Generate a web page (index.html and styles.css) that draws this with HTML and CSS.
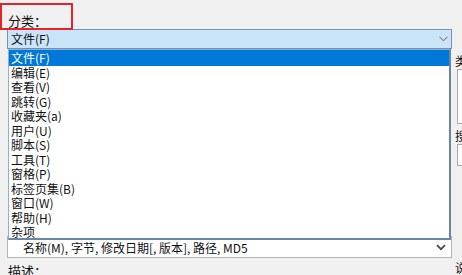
FILE: index.html
```html
<!DOCTYPE html>
<html lang="zh-CN">
<head>
<meta charset="utf-8">
<title>分类</title>
<link rel="stylesheet" href="styles.css">
</head>
<body>
<div class="dialog">
  <div class="main">
    <div class="cat-label">分类：</div>
    <div class="combo combo-open">
      <span class="combo-text">文件(F)</span>
      <svg class="chev" width="9" height="6" viewBox="0 0 9 6"><path d="M0.5 0.8 L4.5 4.8 L8.5 0.8" fill="none" stroke="#5a5a5a" stroke-width="1"/></svg>
    </div>
    <div class="gap"></div>
    <div class="combo combo2">
      <span class="combo-text">名称(M), 字节, 修改日期[, 版本], 路径, MD5</span>
      <svg class="chev chev2" width="10" height="7" viewBox="0 0 10 7"><path d="M1 1.2 L5 5.2 L9 1.2" fill="none" stroke="#4a4a4a" stroke-width="1.8"/></svg>
    </div>
    <div class="desc-label">描述：</div>
  </div>
  <div class="side">
    <div class="side-label">类</div>
    <div class="side-box tall"></div>
    <div class="side-label second">搜</div>
    <div class="side-box short"></div>
    <div class="side-label third">说</div>
  </div>

  <ul class="dropdown">
    <li class="selected">文件(F)</li>
    <li>编辑(E)</li>
    <li>查看(V)</li>
    <li>跳转(G)</li>
    <li>收藏夹(a)</li>
    <li>用户(U)</li>
    <li>脚本(S)</li>
    <li>工具(T)</li>
    <li>窗格(P)</li>
    <li>标签页集(B)</li>
    <li>窗口(W)</li>
    <li>帮助(H)</li>
    <li>杂项</li>
  </ul>
  <div class="highlight-box"></div>
</div>
</body>
</html>
```

FILE: styles.css
```css
html, body {
  margin: 0;
  padding: 0;
}
body {
  width: 462px;
  height: 275px;
  overflow: hidden;
  background: #f0f0f0;
  font-family: "Noto Sans CJK SC", "Noto Sans", sans-serif;
  font-size: 12px;
  color: #111;
}
.dialog {
  position: relative;
  display: flex;
  width: 462px;
  height: 275px;
  overflow: hidden;
}
.main {
  width: 452px;
  flex: none;
  display: flex;
  flex-direction: column;
}
.cat-label {
  height: 29px;
  box-sizing: border-box;
  padding: 13px 0 0 8px;
  font-size: 13px;
  line-height: 16px;
}
.combo {
  margin-left: 7px;
  width: 445px;
  box-sizing: border-box;
  display: flex;
  align-items: center;
  justify-content: space-between;
  flex: none;
}
.combo-open {
  height: 20px;
  background: #cce4f7;
  border: 1px solid #6f93b8;
  padding: 0 3px 0 3px;
}
.combo-text {
  line-height: 16px;
  white-space: nowrap;
}
.chev {
  display: block;
}
.gap {
  height: 187px;
  flex: none;
}
.combo2 {
  height: 22px;
  background: #fff;
  border: 1px solid #b4b4b4;
  padding: 0 5px 0 15px;
}
.combo2 .combo-text {
  padding-top: 1px;
}
.desc-label {
  padding-left: 8px;
  margin-top: 5px;
  font-size: 13px;
  line-height: 16px;
}
.side {
  margin-left: 3px;
  width: 30px;
  flex: none;
  display: flex;
  flex-direction: column;
  padding-top: 54px;
  box-sizing: border-box;
}
.side-label {
  height: 14px;
  line-height: 14px;
  font-size: 12px;
}
.side-label.second {
  margin-top: 5px;
}
.side-label.third {
  margin-top: 95px;
}
.side-box {
  margin-left: 2px;
  margin-top: 1px;
  background: #fff;
  border: 1px solid #a9a9a9;
  box-sizing: border-box;
}
.side-box.tall {
  height: 56px;
}
.side-box.short {
  height: 22px;
}
.dropdown {
  position: absolute;
  top: 49px;
  left: 8px;
  width: 443px;
  height: 191px;
  box-sizing: border-box;
  margin: 0;
  padding: 0;
  list-style: none;
  background: #fff;
  border-left: 1px solid #8fb0d2;
  border-top: 1px solid #8fb0d2;
  border-right: 2px solid #6787aa;
  border-bottom: 2px solid #6787aa;
  z-index: 5;
}
.dropdown li {
  height: 14.5px;
  line-height: 14.5px;
  padding-left: 2px;
  white-space: nowrap;
}
.dropdown li.selected {
  height: 15.5px;
  line-height: 15.5px;
  background: #0078d7;
  color: #fff;
}
.highlight-box {
  position: absolute;
  left: 0;
  top: 3px;
  width: 73px;
  height: 27px;
  box-sizing: border-box;
  border: 2px solid #e2252b;
  z-index: 10;
}
```
